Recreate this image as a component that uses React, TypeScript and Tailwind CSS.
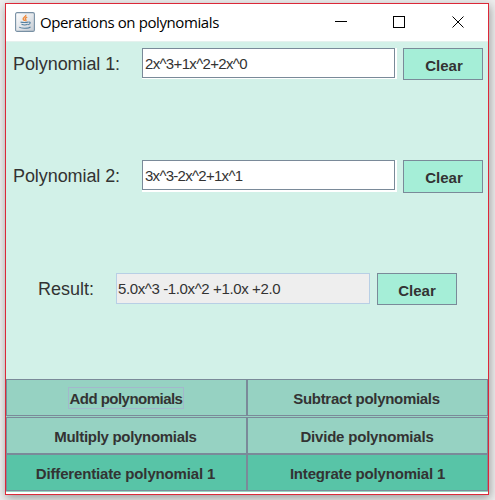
import type { ReactNode } from 'react';

function JavaIcon() {
  return (
    <svg width="20" height="20" viewBox="0 0 20 20" className="mt-[-2px] shrink-0">
      <defs>
        <linearGradient id="tile" x1="0" y1="0" x2="1" y2="1">
          <stop offset="0" stopColor="#ffffff" />
          <stop offset="0.5" stopColor="#e4e7eb" />
          <stop offset="1" stopColor="#c3cad2" />
        </linearGradient>
      </defs>
      <rect x="0.6" y="0.6" width="18.8" height="18.8" rx="1.5" fill="url(#tile)" stroke="#7890a4" strokeWidth="1.1" />
      <path d="M10.700 2.800c1 1.700-3.200 2.700-2.500 4.400.3.8 1.300 1.100 1.300 1.900M12.200 5.200c-2.400 1-2.200 1.700-1.400 2.600.4.5.1 1-.3 1.300" fill="none" stroke="#ef8a3c" strokeWidth="1.4" />
      <path d="M5.500 10c1.500.7 6.300.7 7.900 0M6.500 12.300c1.500.7 4.800.7 6.200 0M13.600 10c2.300-.3 2.100 2-.5 2.700M4.200 15c1.500 1.700 9.600 1.600 11.300-.2" fill="none" stroke="#54809f" strokeWidth="1.1" />
    </svg>
  );
}

function Label({ className, children }: { className: string; children: ReactNode }) {
  return <div className={`h-[31px] shrink-0 whitespace-nowrap text-[18px] ${className}`}>{children}</div>;
}

function Field({ className, value }: { className: string; value: string }) {
  return (
    <div className={`w-[255px] shrink-0 bg-white pr-[2px] ${className}`}>
      <div className="h-[30px] border border-[#7a8a99] pl-[2px] text-[15px] leading-[29px]">{value}</div>
    </div>
  );
}

function ClearButton({ className }: { className: string }) {
  return (
    <button className={`w-[80px] shrink-0 border border-[#7a8a99] bg-[#a5eed7] text-[15px] leading-[27px] font-bold ${className}`}>
      Clear
    </button>
  );
}

function Operation({ className, children }: { className: string; children: ReactNode }) {
  return (
    <button className={`flex h-[37px] items-center justify-center border border-[#7a8a99] text-[15px] leading-[18px] font-bold whitespace-nowrap ${className}`}>
      {children}
    </button>
  );
}

export default function App() {
  return (
    <div className="h-[500px] w-[495px] overflow-hidden bg-[#ededed] pt-[3px] pl-[5px] font-['Liberation_Sans',Arial,sans-serif] text-[#333333]">
      <div className="flex h-[492px] w-[484px] flex-col border border-[#dc2838] bg-white shadow-[1px_3px_9px_rgba(0,0,0,0.35)]">
        <header className="flex h-[37px] shrink-0 items-center pl-[9px] text-black">
          <JavaIcon />
          <h1 className="mt-[-2px] ml-[5px] w-[200px] shrink-0 whitespace-nowrap font-['Open_Sans',sans-serif] text-[15px] leading-[20px] tracking-[-0.4px]">Operations on polynomials</h1>
          <svg width="130" height="12" viewBox="0 0 130 12" className="mt-[-2px] ml-[95px] shrink-0" fill="none" stroke="#000">
            <path d="M0 5.500h12M58.500 .5h11v11h-11z" shapeRendering="crispEdges" />
            <path d="M117.500 .5l11 11M128.500 .5l-11 11" />
          </svg>
        </header>
        <main className="h-[338px] shrink-0 border-t border-[#e4f1ed] bg-[#d2f1e8]">
          <div className="flex h-[112px] pt-[6px] pl-[7px]">
            <Label className="w-[129px] leading-[33px] tracking-[-0.08px]">Polynomial 1:</Label>
            <Field className="h-[31px] tracking-[-0.67px]" value="2x^3+1x^2+2x^0" />
            <ClearButton className="ml-[6px] h-[32px] pt-[3px] pl-[2px]" />
          </div>
          <div className="flex h-[113px] pt-[6px] pl-[7px]">
            <Label className="w-[129px] leading-[33px] tracking-[-0.08px]">Polynomial 2:</Label>
            <Field className="h-[32px] tracking-[-0.72px]" value="3x^3-2x^2+1x^1" />
            <ClearButton className="ml-[6px] h-[33px] pt-[2px] pl-[2px]" />
          </div>
          <div className="flex pt-[6px] pl-[32px]">
            <Label className="w-[78px] leading-[32px]">Result:</Label>
            <div className="h-[31px] w-[254px] border border-[#b8cfe5] bg-[#eeeeee] pl-[1px] text-[15px] leading-[30px] tracking-[-0.38px]">5.0x^3 -1.0x^2 +1.0x +2.0</div>
            <ClearButton className="ml-[7px] h-[32px] pt-[3px]" />
          </div>
        </main>
        <section className="grid h-[113px] grid-cols-2 grid-rows-[38px_37px_37px] border-b border-[#96d3c2] bg-[#96d3c2]">
          <Operation className="bg-[#96d2c2] pr-[2px]">
            <span className="h-[22px] w-[116px] border border-[#a3b8cc] pl-px text-left leading-[21px] tracking-[-0.53px]">Add polynomials</span>
          </Operation>
          <Operation className="bg-[#96d2c2] pt-[2px] pr-[2px] tracking-[-0.3px]">Subtract polynomials</Operation>
          <Operation className="bg-[#96d2c2] pt-[2px] pr-[2px] tracking-[-0.3px]">Multiply polynomials</Operation>
          <Operation className="bg-[#96d2c2] pt-[2px] pr-[1px] tracking-[-0.2px]">Divide polynomials</Operation>
          <Operation className="bg-[#58c4a7] pt-[2px] pr-[2px] tracking-[-0.15px]">Differentiate polynomial 1</Operation>
          <Operation className="bg-[#58c4a7] pt-[2px] tracking-[-0.18px]">Integrate polynomial 1</Operation>
        </section>
      </div>
    </div>
  );
}
